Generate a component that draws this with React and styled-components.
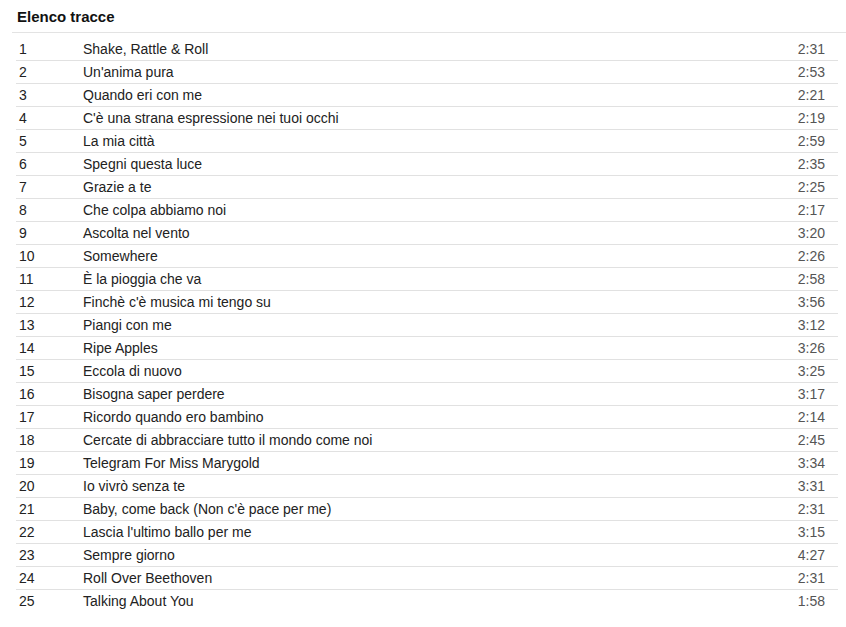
import React from "react";
import styled, { createGlobalStyle } from "styled-components";

const GlobalStyle = createGlobalStyle`
  html, body {
    margin: 0;
    padding: 0;
    background: #fff;
  }
  body {
    font-family: "Liberation Sans", Arial, sans-serif;
    color: #222;
  }
`;

const tracks = [
  ["Shake, Rattle & Roll", "2:31"],
  ["Un'anima pura", "2:53"],
  ["Quando eri con me", "2:21"],
  ["C'è una strana espressione nei tuoi occhi", "2:19"],
  ["La mia città", "2:59"],
  ["Spegni questa luce", "2:35"],
  ["Grazie a te", "2:25"],
  ["Che colpa abbiamo noi", "2:17"],
  ["Ascolta nel vento", "3:20"],
  ["Somewhere", "2:26"],
  ["È la pioggia che va", "2:58"],
  ["Finchè c'è musica mi tengo su", "3:56"],
  ["Piangi con me", "3:12"],
  ["Ripe Apples", "3:26"],
  ["Eccola di nuovo", "3:25"],
  ["Bisogna saper perdere", "3:17"],
  ["Ricordo quando ero bambino", "2:14"],
  ["Cercate di abbracciare tutto il mondo come noi", "2:45"],
  ["Telegram For Miss Marygold", "3:34"],
  ["Io vivrò senza te", "3:31"],
  ["Baby, come back (Non c'è pace per me)", "2:31"],
  ["Lascia l'ultimo ballo per me", "3:15"],
  ["Sempre giorno", "4:27"],
  ["Roll Over Beethoven", "2:31"],
  ["Talking About You", "1:58"],
];

const Section = styled.section`
  padding: 9px 0 0 12px;
`;

const Heading = styled.h2`
  margin: 0;
  padding: 0 0 7px 5px;
  font-size: 15px;
  font-weight: bold;
  line-height: 16px;
  color: #111;
  border-bottom: 1px solid #e3e3e3;
`;

const List = styled.ol`
  list-style: none;
  margin: 5px 8px 0 4px;
  padding: 0;
`;

const Row = styled.li`
  display: grid;
  grid-template-columns: 64px 1fr auto;
  align-items: center;
  height: 22px;
  padding: 0 13px 0 3px;
  font-size: 14px;
  border-bottom: 1px solid ${(p) => (p.last ? "transparent" : "#e1e1e1")};
`;

const Num = styled.span`
  color: #222;
`;

const Title = styled.span`
  color: #222;
`;

const Time = styled.span`
  color: #555;
`;

export default function App() {
  return (
    <>
      <GlobalStyle />
      <Section>
        <Heading>Elenco tracce</Heading>
        <List>
          {tracks.map(([title, time], i) => (
            <Row key={i} last={i === tracks.length - 1}>
              <Num>{i + 1}</Num>
              <Title>{title}</Title>
              <Time>{time}</Time>
            </Row>
          ))}
        </List>
      </Section>
    </>
  );
}
